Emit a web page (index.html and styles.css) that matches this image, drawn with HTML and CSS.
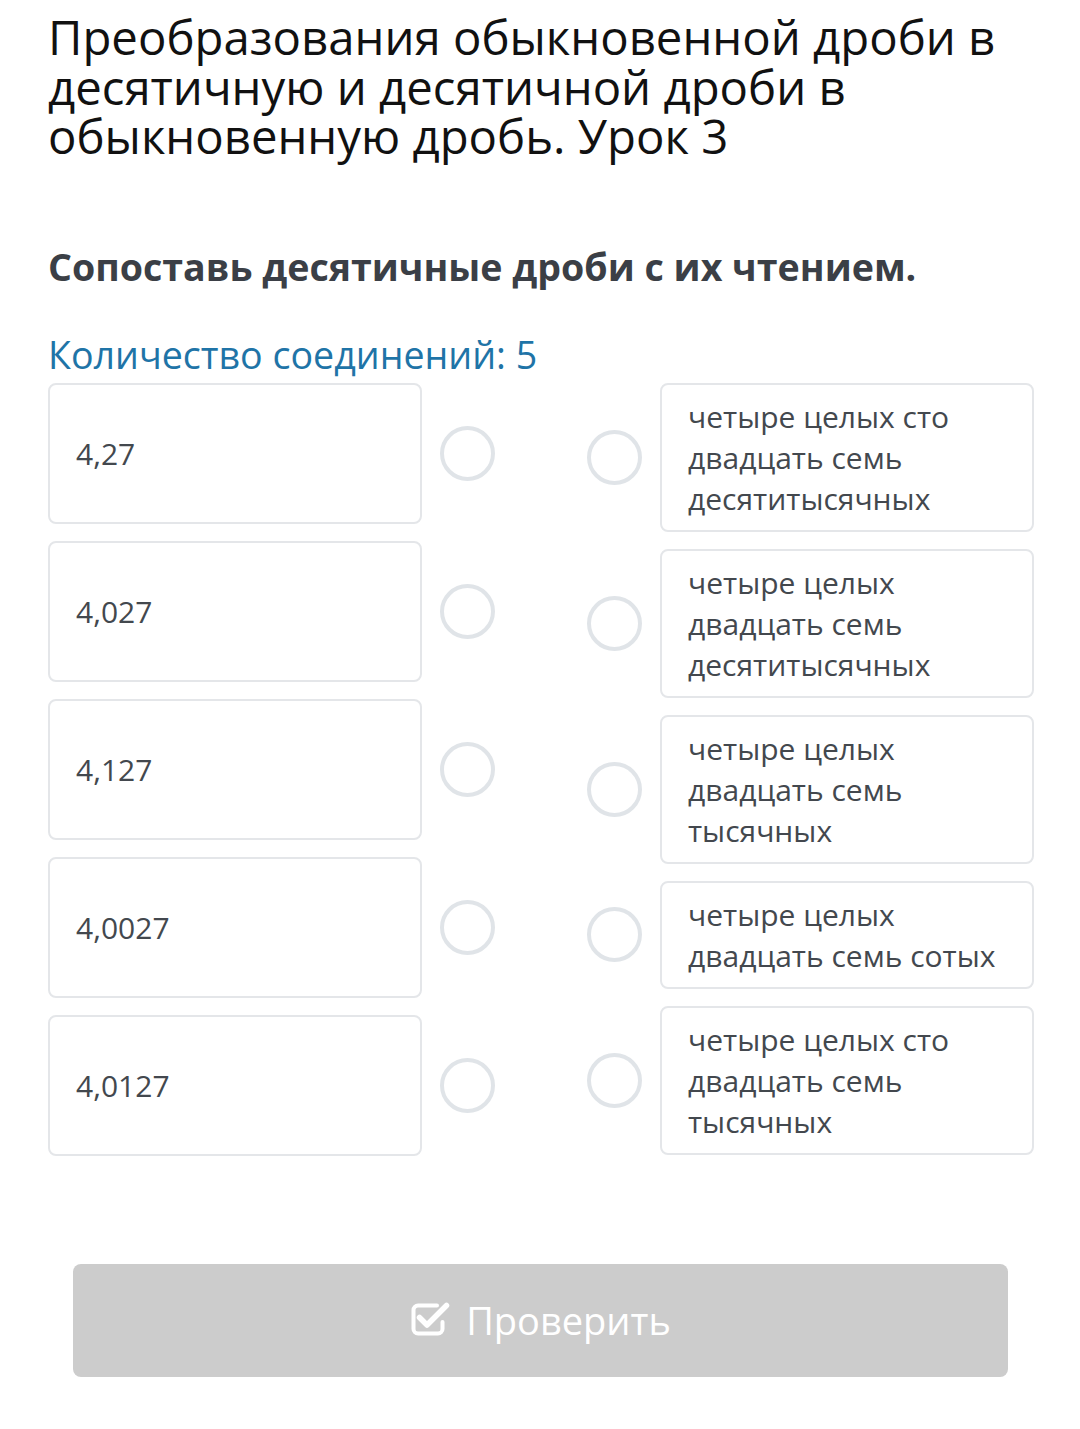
FILE: index.html
```html
<!DOCTYPE html>
<html lang="ru">
<head>
<meta charset="utf-8">
<title>Урок 3</title>
<link rel="stylesheet" href="styles.css">
</head>
<body>
<div class="page">
  <h1 class="title">Преобразования обыкновенной дроби в десятичную и десятичной дроби в обыкновенную дробь. Урок 3</h1>
  <h2 class="task">Сопоставь десятичные дроби с их чтением.</h2>
  <div class="count">Количество соединений: 5</div>
  <div class="match">
    <div class="col col-left">
      <div class="row"><div class="box box-left">4,27</div><span class="dot"></span></div>
      <div class="row"><div class="box box-left">4,027</div><span class="dot"></span></div>
      <div class="row"><div class="box box-left">4,127</div><span class="dot"></span></div>
      <div class="row"><div class="box box-left">4,0027</div><span class="dot"></span></div>
      <div class="row"><div class="box box-left">4,0127</div><span class="dot"></span></div>
    </div>
    <div class="col col-right">
      <div class="row"><span class="dot"></span><div class="box box-right">четыре целых сто двадцать семь десятитысячных</div></div>
      <div class="row"><span class="dot"></span><div class="box box-right">четыре целых двадцать семь десятитысячных</div></div>
      <div class="row"><span class="dot"></span><div class="box box-right">четыре целых двадцать семь тысячных</div></div>
      <div class="row"><span class="dot"></span><div class="box box-right">четыре целых двадцать семь сотых</div></div>
      <div class="row"><span class="dot"></span><div class="box box-right">четыре целых сто двадцать семь тысячных</div></div>
    </div>
  </div>
  <button class="check" type="button">
    <svg class="check-icon" width="40" height="36" viewBox="0 0 40 36" aria-hidden="true">
      <path d="M27 4.5 H8 a4.5 4.5 0 0 0 -4.5 4.5 V28 a4.5 4.5 0 0 0 4.5 4.5 H28 a4.5 4.5 0 0 0 4.5 -4.5 V21" fill="none" stroke="#fff" stroke-width="4" stroke-linecap="round"/>
      <path d="M9.5 16.5 L17 24 L36.5 4.5" fill="none" stroke="#fff" stroke-width="5.5" stroke-linecap="round" stroke-linejoin="round"/>
    </svg>
    <span>Проверить</span>
  </button>
</div>
</body>
</html>
```

FILE: styles.css
```css
html, body {
  margin: 0;
  padding: 0;
  background: #ffffff;
}

body {
  font-family: "Open Sans", "Noto Sans", sans-serif;
}

.page {
  padding: 12px 46px 40px 48px;
}

.title {
  margin: 0;
  font-size: 47.3px;
  line-height: 49.5px;
  font-weight: 400;
  color: #111111;
}

.task {
  margin: 82px 0 0;
  font-size: 37.6px;
  line-height: 48px;
  font-weight: 700;
  color: #3b3f46;
}

.count {
  margin-top: 40px;
  font-size: 37.6px;
  line-height: 48px;
  color: #1f74a7;
}

.match {
  margin-top: 4px;
  display: flex;
  justify-content: space-between;
}

.col {
  display: flex;
  flex-direction: column;
  width: 447px;
}

.col-left {
  gap: 17px;
}

.col-right {
  gap: 17px;
}

.row {
  display: flex;
  align-items: center;
  gap: 18px;
}

.box {
  box-sizing: border-box;
  width: 374px;
  border: 2px solid #e4e6e9;
  border-radius: 8px;
  background: #ffffff;
  color: #43484e;
  font-size: 30px;
  line-height: 41px;
}

.box-left {
  height: 141px;
  display: flex;
  align-items: center;
  padding: 0 26px;
}

.box-right {
  padding: 11px 26px;
}

.dot {
  flex: none;
  box-sizing: border-box;
  width: 55px;
  height: 55px;
  border: 4px solid #e0e4e8;
  border-radius: 50%;
}

.check {
  margin: 108px 25px 0 25px;
  width: 935px;
  height: 113px;
  border: none;
  border-radius: 8px;
  background: #cccccc;
  color: #ffffff;
  font-family: "Open Sans", "Noto Sans", sans-serif;
  font-size: 38px;
  display: flex;
  align-items: center;
  justify-content: center;
  gap: 16px;
  padding: 0;
}

.check-icon {
  display: block;
  margin-top: -2px;
}
```
